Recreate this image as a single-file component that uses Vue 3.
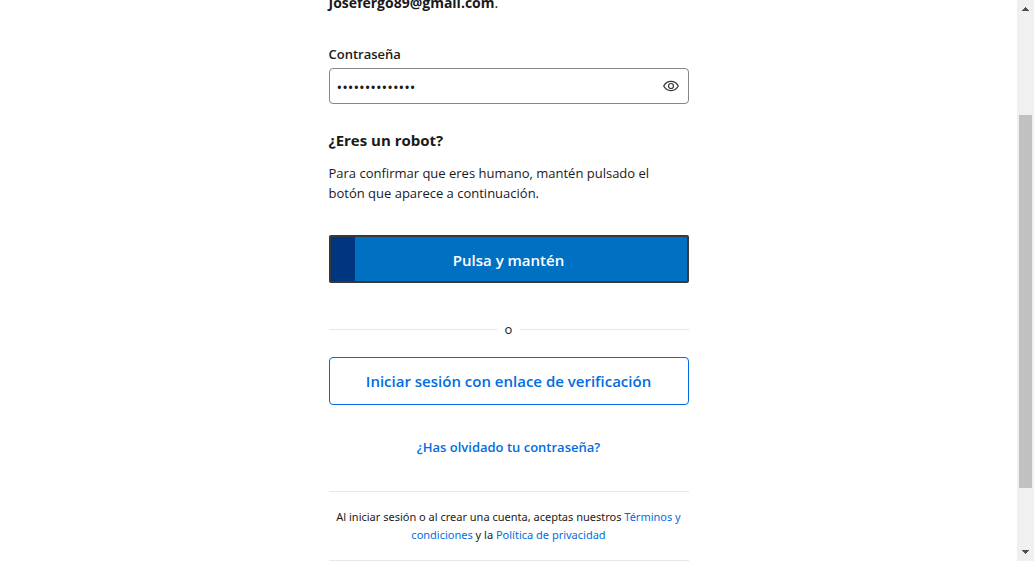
<script setup>
import { ref } from 'vue'

const password = ref('contrasena1234')
const visible = ref(false)
const progress = ref(7)
</script>

<template>
  <div class="viewport">
    <main class="page">
      <form class="signin" @submit.prevent>
        <p class="account"><strong>Josefergo89@gmail.com</strong>.</p>

        <label class="label" for="password">Contraseña</label>
        <div class="field">
          <input id="password" v-model="password" class="input" :type="visible ? 'text' : 'password'" />
          <button class="reveal" type="button" aria-label="Mostrar contraseña" @click="visible = !visible">
            <svg width="16" height="16" viewBox="0 0 16 16" fill="none" stroke="#333" stroke-width="1.2">
              <path d="M.7 8C2.3 5 4.9 3.4 8 3.4S13.7 5 15.3 8C13.7 11 11.1 12.6 8 12.6S2.3 11 .7 8Z" />
              <circle cx="8" cy="8" r="2.5" />
            </svg>
          </button>
        </div>

        <h2 class="heading">¿Eres un robot?</h2>
        <p class="text">Para confirmar que eres humano, mantén pulsado el botón que aparece a continuación.</p>

        <button class="hold" type="button">
          <span class="fill" :style="{ width: progress + '%' }"></span>
          <span class="hold-text">Pulsa y mantén</span>
        </button>

        <div class="divider"><span>o</span></div>

        <button class="outline" type="button">Iniciar sesión con enlace de verificación</button>
        <a class="forgot" href="#">¿Has olvidado tu contraseña?</a>

        <p class="legal">
          Al iniciar sesión o al crear una cuenta, aceptas nuestros <a href="#">Términos y condiciones</a> y la
          <a href="#">Política de privacidad</a>
        </p>
      </form>
    </main>
    <div class="scrollbar" aria-hidden="true">
      <svg class="arrow" width="17" height="17" viewBox="0 0 17 17" shape-rendering="crispEdges">
        <path d="M8 7h1v1h1v1h1v1h1v1H5v-1h1V9h1V8h1z" fill="#505050" />
      </svg>
      <div class="track">
        <span class="before"></span>
        <span class="thumb"></span>
        <span class="after"></span>
      </div>
      <svg class="arrow" width="17" height="17" viewBox="0 0 17 17" shape-rendering="crispEdges">
        <path d="M5 6h7v1h-1v1h-1v1H9v1H8V9H7V8H6V7H5z" fill="#505050" />
      </svg>
    </div>
  </div>
</template>

<style>
body {
  margin: 0;
  background: #fff;
}
</style>

<style scoped>
.viewport {
  display: flex;
  height: 100vh;
  overflow: hidden;
  color: #1a1a1a;
  font-family: "Open Sans", "Noto Sans", sans-serif;
  font-size: 13px;
  line-height: 20px;
}
.page {
  flex: 1;
  min-width: 0;
  overflow: hidden;
}
.signin {
  display: flex;
  flex-direction: column;
  box-sizing: border-box;
  max-width: 360px;
  margin: -7px auto 0;
}
p,
h2 {
  margin: 0;
}
button,
input {
  font: inherit;
}
button {
  cursor: pointer;
}
a {
  color: #006ce4;
  text-decoration: none;
}
.account {
  margin-bottom: 31px;
  font-size: 14px;
}
.label {
  margin-bottom: 4px;
  font-weight: 600;
}
.field {
  display: flex;
  align-items: center;
  box-sizing: border-box;
  height: 36px;
  border: 1px solid #868686;
  border-radius: 4px;
}
.input {
  flex: 1;
  min-width: 0;
  padding: 2px 7px 0;
  border: 0;
  outline: 0;
  background: none;
  color: #1a1a1a;
  font-size: 15px;
}
.reveal {
  display: flex;
  padding: 0 9px;
  border: 0;
  background: none;
}
.heading {
  margin: 24px 0 11px;
  font-size: 15px;
  font-weight: 700;
  line-height: 24px;
}
.hold {
  position: relative;
  height: 48px;
  margin-top: 32px;
  padding: 2px 0 0;
  border: 2px solid #383838;
  border-radius: 2px;
  background: #0071c2;
  color: #fff;
  font-size: 15px;
  font-weight: 600;
}
.fill {
  position: absolute;
  top: 0;
  bottom: 0;
  left: 0;
  background: #003580;
}
.hold-text {
  position: relative;
}
.divider {
  display: flex;
  align-items: center;
  gap: 8px;
  margin: 36px 0 18px;
}
.divider::before,
.divider::after {
  flex: 1;
  height: 1px;
  background: #e7e7e7;
  content: "";
}
.outline {
  height: 48px;
  border: 1px solid #006ce4;
  border-radius: 4px;
  background: #fff;
  color: #006ce4;
  font-size: 15px;
  font-weight: 600;
}
.forgot {
  align-self: center;
  margin: 32px 0 34px;
  font-weight: 600;
}
.legal {
  padding: 16px 0;
  border: 1px solid #e7e7e7;
  border-width: 1px 0;
  font-family: "Noto Sans", "Open Sans", sans-serif;
  font-size: 11px;
  line-height: 18px;
  text-align: center;
}
.scrollbar {
  display: flex;
  flex-direction: column;
  width: 17px;
  background: #f0f0f0;
}
.arrow {
  display: block;
}
.track {
  display: flex;
  flex: 1;
  flex-direction: column;
  padding: 0 2px;
}
.before {
  flex: 98;
}
.thumb {
  flex: 373;
  background: #c1c1c1;
}
.after {
  flex: 56;
}
</style>
